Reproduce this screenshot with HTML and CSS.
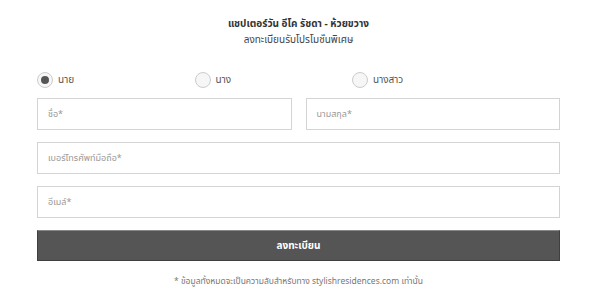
FILE: index.html
```html
<!DOCTYPE html>
<html lang="th">
<head>
<meta charset="utf-8">
<link rel="stylesheet" href="styles.css">
</head>
<body>
<div class="form">
  <div class="head">
    <div class="title">แชปเตอร์วัน อีโค รัชดา - ห้วยขวาง</div>
    <div class="sub">ลงทะเบียนรับโปรโมชั่นพิเศษ</div>
  </div>
  <div class="radios">
    <label class="radio"><span class="dot on"></span><span>นาย</span></label>
    <label class="radio"><span class="dot"></span><span>นาง</span></label>
    <label class="radio"><span class="dot"></span><span>นางสาว</span></label>
  </div>
  <div class="row two">
    <div class="field">ชื่อ*</div>
    <div class="field">นามสกุล*</div>
  </div>
  <div class="row"><div class="field">เบอร์โทรศัพท์มือถือ*</div></div>
  <div class="row"><div class="field">อีเมล์*</div></div>
  <div class="row"><div class="btn">ลงทะเบียน</div></div>
  <div class="note">* ข้อมูลทั้งหมดจะเป็นความลับสำหรับทาง stylishresidences.com เท่านั้น</div>
</div>
</body>
</html>
```
FILE: styles.css
```css
html, body { margin: 0; padding: 0; background: #fff; }
body { font-family: "Noto Sans Thai", "Noto Sans", "Liberation Sans", sans-serif; color: #333; }
.form { width: 523px; margin-left: 37px; padding-top: 16px; }
.head { text-align: center; }
.title { font-size: 10px; font-weight: 700; color: #333; line-height: 16px; }
.sub { font-size: 10px; color: #444; line-height: 16px; }
.radios { display: flex; margin-top: 22px; height: 20px; align-items: center; }
.radio { display: flex; align-items: center; gap: 5px; width: 157.5px; font-size: 10px; color: #555; }
.dot { border-radius: 50%; border: 1px solid #ccc; background: #f6f6f6; display: flex; align-items: center; justify-content: center; box-sizing: border-box; width: 16px; height: 16px; }
.dot.on::after { content: ""; width: 8px; height: 8px; border-radius: 50%; background: #555; }
.row { display: flex; margin-top: 12px; }
.radios + .row { margin-top: 8px; }
.row.two { gap: 14px; }
.field { flex: 1; height: 32px; box-sizing: border-box; border: 1px solid #d4d4d4; padding: 0 10px; font-size: 9px; color: #999; display: flex; align-items: center; }
.btn { flex: 1; height: 31px; box-sizing: border-box; background: #555; border: 1px solid #3f3f3f; border-top-color: #888; color: #fff; font-size: 10px; font-weight: 700; display: flex; align-items: center; justify-content: center; }
.note { text-align: center; font-size: 8.5px; color: #777; margin-top: 14px; }
```
